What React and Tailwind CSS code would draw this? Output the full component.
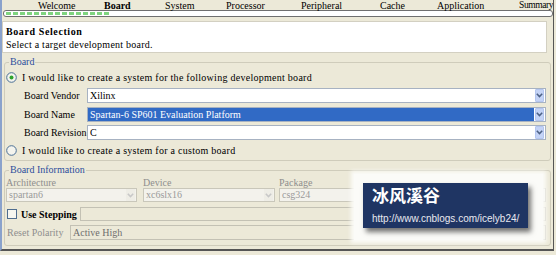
import React from "react";

const Chevron = ({ color = "#4d6185" }) => (
  <svg width="7" height="5" viewBox="0 0 7 5">
    <polyline points="0.8,0.8 3.5,3.6 6.2,0.8" fill="none" stroke={color} strokeWidth="1.5" />
  </svg>
);

const Combo = ({ value, selected, width }) => (
  <div
    className={`flex items-center h-[15px] border border-[#a7b2c2] bg-white ${width}`}
  >
    <div
      className={`flex-1 h-full flex items-center pl-[2px] ${
        selected ? "bg-[#316ac5] text-white" : "text-black"
      }`}
    >
      {value}
    </div>
    <div className="w-[9px] h-[13px] mx-[1px] rounded-[1px] bg-[#c4d3f6] border border-[#b3c5ef] flex items-center justify-center">
      <Chevron />
    </div>
  </div>
);

const DisabledCombo = ({ value }) => (
  <div className="flex items-center h-[14px] border border-[#c9c7ba] bg-[#f3f2ec] text-[#9a9a9a]">
    <div className="flex-1 pl-[2px] leading-[12px]">{value}</div>
    <div className="w-[9px] h-[12px] mr-[1px] bg-[#eeede6] flex items-center justify-center">
      <Chevron color="#c8c8c8" />
    </div>
  </div>
);

const Radio = ({ checked }) => (
  <svg width="11" height="11" viewBox="0 0 11 11">
    <circle cx="5.5" cy="5.5" r="4.8" fill="#f4f4ee" stroke="#4a6f95" strokeWidth="1" />
    {checked && <circle cx="5.5" cy="5.5" r="2" fill="#2ea32e" />}
  </svg>
);

export default function App() {
  const tabs = [
    ["Welcome", "w-[66px]"],
    ["Board", "w-[61px] font-bold"],
    ["System", "w-[61px]"],
    ["Processor", "w-[75px]"],
    ["Peripheral", "w-[79px]"],
    ["Cache", "w-[57px]"],
    ["Application", "w-[82px]"],
    ["Summary", "w-[35px] text-[9.5px] tracking-[-0.4px]"],
  ];
  return (
    <div className="w-[556px] h-[255px] bg-[#ece9d8] overflow-hidden font-['Liberation_Serif',serif] text-[10px] text-black relative">
      <div className="w-[554px] h-[251px] border-l-2 border-l-[#8aa2cc] border-r border-r-[#555555] border-b-2 border-b-[#555555] overflow-hidden">
        {/* tabs */}
        <div className="h-[10px] flex pl-[36px] leading-[11px] whitespace-nowrap">
          {tabs.map(([t, c]) => (
            <span key={t} className={`shrink-0 ${c}`}>
              {t}
            </span>
          ))}
        </div>
        {/* progress */}
        <div className="ml-[1px] w-[550px] h-[7px] border border-[#6f6f6f] rounded-[3px] bg-white flex items-center gap-[2px] px-[2px]">
          {Array.from({ length: 15 }).map((_, i) => (
            <div key={i} className="w-[5px] h-[3px] bg-[#7fd47f]" />
          ))}
        </div>
        {/* header panel */}
        <div className="mt-[4px] w-[545px] h-[32px] bg-white border border-[#d3d0c2] pl-[3px] pt-[3px]">
          <div className="font-bold leading-[13px] tracking-[0.6px]">Board Selection</div>
          <div className="leading-[13px] tracking-[0.25px]">Select a target development board.</div>
        </div>
        {/* Board group */}
        <fieldset className="mt-[3px] ml-[2px] w-[547px] border border-[#cfccbb] rounded-[3px] pb-[4px]">
          <legend className="ml-[4px] px-[1px] leading-[12px] text-[#2d4e9c]">Board</legend>
          <div className="mt-[3px] h-[12px] flex items-center gap-[5px] pl-[1px]">
            <Radio checked />
            <span className="tracking-[0.27px]">I would like to create a system for the following development board</span>
          </div>
          <div className="mt-[5px] flex items-center pl-[19px]">
            <span className="w-[63px] shrink-0">Board Vendor</span>
            <Combo value="Xilinx" width="w-[459px]" />
          </div>
          <div className="mt-[4px] flex items-center pl-[19px]">
            <span className="w-[63px] shrink-0">Board Name</span>
            <Combo value="Spartan-6 SP601 Evaluation Platform" selected width="w-[459px]" />
          </div>
          <div className="mt-[3px] flex items-center pl-[19px]">
            <span className="w-[63px] shrink-0">Board Revision</span>
            <Combo value="C" width="w-[459px]" />
          </div>
          <div className="mt-[4px] h-[12px] flex items-center gap-[5px] pl-[1px]">
            <Radio />
            <span className="tracking-[0.27px]">I would like to create a system for a custom board</span>
          </div>
        </fieldset>
        {/* Board Information group */}
        <fieldset className="mt-[3px] ml-[2px] w-[547px] border border-[#cfccbb] rounded-[3px] pb-[5px]">
          <legend className="ml-[4px] px-[1px] leading-[12px] text-[#2d4e9c]">Board Information</legend>
          <div className="mt-[2px] flex pl-[1px]">
            <div className="w-[131px] flex flex-col">
              <span className="leading-[10px] text-[#8e8e8e]">Architecture</span>
              <DisabledCombo value="spartan6" />
            </div>
            <div className="ml-[6px] w-[132px] flex flex-col">
              <span className="leading-[10px] text-[#8e8e8e]">Device</span>
              <DisabledCombo value="xc6slx16" />
            </div>
            <div className="ml-[4px] w-[132px] flex flex-col">
              <span className="leading-[10px] text-[#8e8e8e]">Package</span>
              <DisabledCombo value="csg324" />
            </div>
            <div className="ml-[4px] w-[131px] flex flex-col">
              <span className="h-[10px]" />
              <DisabledCombo value="" />
            </div>
          </div>
          <div className="mt-[5px] h-[14px] flex items-center pl-[2px]">
            <div className="w-[10px] h-[10px] border border-[#4f6d8f] bg-[#f6f6f0] shrink-0" />
            <span className="ml-[4px] w-[59px] shrink-0 font-bold">Use Stepping</span>
            <div className="w-[466px] h-[14px] border border-[#c3c1b4] bg-[#ece9d8]" />
          </div>
          <div className="mt-[4px] h-[15px] flex items-center pl-[2px]">
            <span className="w-[63px] shrink-0 text-[#8e8e8e]">Reset Polarity</span>
            <div className="w-[476px] h-[15px] border border-[#c3c1b4] bg-[#ece9d8] pl-[2px] leading-[13px] text-[#6e6e6e]">
              Active High
            </div>
          </div>
        </fieldset>
      </div>
      {/* watermark overlay */}
      <div className="absolute left-[354px] top-[174px] w-[189px] h-[66px] bg-[#fbfbf8] shadow-[0_0_4px_3px_#fbfbf8]">
        <div className="absolute left-[9px] top-[9px] w-[165px] h-[45px] bg-[#1f3563] shadow-[3px_4px_5px_rgba(0,0,0,0.55)] pl-[9px]">
          <div className="mt-[1px] text-[17px] leading-[22px] font-bold text-white font-['Noto_Sans_CJK_SC',sans-serif]">
            冰风溪谷
          </div>
          <div className="mt-[7px] text-[10px] leading-[12px] text-[#e8e9f0] font-['Liberation_Sans',sans-serif]">
            http://www.cnblogs.com/icelyb24/
          </div>
        </div>
      </div>
    </div>
  );
}
